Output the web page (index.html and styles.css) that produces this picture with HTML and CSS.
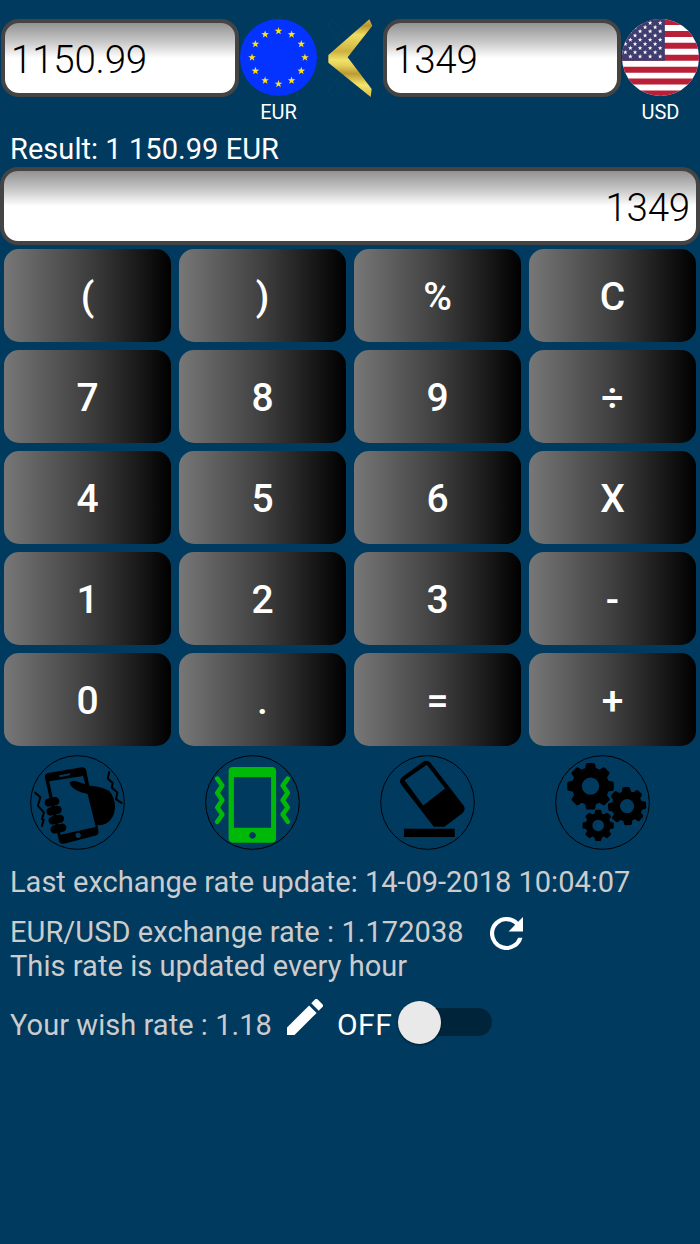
FILE: index.html
```html
<!DOCTYPE html>
<html lang="en">
<head>
    <meta charset="UTF-8">
    <meta name="viewport" content="width=device-width, initial-scale=1.0">
    <title>Currency calculator</title>
    <link rel="stylesheet" href="styles.css">
</head>
<body>
    <div class="converter">
        <input class="field" type="text" value="1150.99">
        <div class="currency">
            <svg class="flag" viewBox="-115 -115 230 230">
                <defs>
                    <path id="star" d="M0-12L2.8-3.9L11.4-3.7L4.6 1.5L7.1 9.7L0 4.8L-7.1 9.7L-4.6 1.5L-11.4-3.7L-2.8-3.9Z"/>
                </defs>
                <circle r="115" fill="#0433ff"/>
                <g fill="#ffe11a">
                    <use href="#star" x="0" y="-79"/>
                    <use href="#star" x="39" y="-69"/>
                    <use href="#star" x="68" y="-40"/>
                    <use href="#star" x="79" y="0"/>
                    <use href="#star" x="68" y="40"/>
                    <use href="#star" x="39" y="69"/>
                    <use href="#star" x="0" y="79"/>
                    <use href="#star" x="-40" y="69"/>
                    <use href="#star" x="-69" y="40"/>
                    <use href="#star" x="-79" y="0"/>
                    <use href="#star" x="-69" y="-40"/>
                    <use href="#star" x="-40" y="-69"/>
                </g>
            </svg>
            <span>EUR</span>
        </div>
        <svg class="arrow" viewBox="0 0 192 234">
            <defs>
                <linearGradient id="gold" gradientUnits="userSpaceOnUse" x1="100" y1="0" x2="92" y2="234">
                    <stop offset="0" stop-color="#d6b446"/>
                    <stop offset="0.08" stop-color="#b8942e"/>
                    <stop offset="0.2" stop-color="#efdd64"/>
                    <stop offset="0.3" stop-color="#e2ca52"/>
                    <stop offset="0.42" stop-color="#cdb040"/>
                    <stop offset="0.53" stop-color="#f0e26a"/>
                    <stop offset="0.6" stop-color="#e4cf58"/>
                    <stop offset="0.7" stop-color="#bd9a33"/>
                    <stop offset="0.84" stop-color="#f3e56a"/>
                    <stop offset="1" stop-color="#d6b846"/>
                </linearGradient>
            </defs>
            <path d="M42 2L160 110L166 125L40 232L31 212L108 116L31 20Z" fill="none" stroke="#0b4262" stroke-width="2"/>
            <path d="M154 1L163 20L89 115L161 210L158 234L31 131V108Z" fill="url(#gold)"/>
        </svg>
        <input class="field" type="text" value="1349">
        <div class="currency">
            <svg class="flag" viewBox="8 13 230 230">
                <defs>
                    <clipPath id="round"><circle cx="123" cy="128" r="115"/></clipPath>
                    <g id="rowA">
                        <use href="#star" transform="translate(122 0) scale(.6)"/>
                        <use href="#star" transform="translate(92 0) scale(.6)"/>
                        <use href="#star" transform="translate(62 0) scale(.6)"/>
                        <use href="#star" transform="translate(33 0) scale(.6)"/>
                    </g>
                    <g id="rowB">
                        <use href="#star" transform="translate(107 0) scale(.6)"/>
                        <use href="#star" transform="translate(77 0) scale(.6)"/>
                        <use href="#star" transform="translate(47 0) scale(.6)"/>
                        <use href="#star" transform="translate(18 0) scale(.6)"/>
                    </g>
                </defs>
                <g clip-path="url(#round)">
                    <path fill="#fff" d="M0 0h250v250H0z"/>
                    <path stroke="#b91f36" stroke-width="17.8" d="M0 22h250M0 57.6h250M0 93.2h250M0 128.8h250M0 164.4h250M0 200h250M0 235.6h250"/>
                    <path fill="#3f3c70" d="M0 0h136v137.7H0z"/>
                    <g fill="#fff">
                        <use href="#rowA" y="25"/>
                        <use href="#rowB" y="37.5"/>
                        <use href="#rowA" y="50"/>
                        <use href="#rowB" y="62.5"/>
                        <use href="#rowA" y="75"/>
                        <use href="#rowB" y="87.5"/>
                        <use href="#rowA" y="100"/>
                        <use href="#rowB" y="112.5"/>
                        <use href="#rowA" y="125"/>
                    </g>
                </g>
            </svg>
            <span>USD</span>
        </div>
    </div>

    <p class="result">Result: 1 150.99 EUR</p>
    <input class="field display" type="text" value="1349">

    <div class="keys">
        <button>(</button>
        <button>)</button>
        <button>%</button>
        <button>C</button>
        <button>7</button>
        <button>8</button>
        <button>9</button>
        <button>÷</button>
        <button>4</button>
        <button>5</button>
        <button>6</button>
        <button>X</button>
        <button>1</button>
        <button>2</button>
        <button>3</button>
        <button>-</button>
        <button>0</button>
        <button>.</button>
        <button>=</button>
        <button>+</button>
    </div>

    <div class="tools">
        <!-- shake to clear -->
        <svg viewBox="30 29 286 286">
            <circle class="ring" cx="173" cy="172" r="141"/>
            <path fill-rule="evenodd" d="M84 83L186 66Q196 65 199 75L236 256Q238 268 228 271L132 296Q120 298 117 287L75 97Q73 86 84 83ZM88 108L122 269L228 246L190 92ZM118 90L151 84L150 90L119 96ZM175 263a8 8 0 1 0 .1 0Z"/>
            <path d="M150 112Q154 104 168 107L208 121Q243 124 268 137Q286 156 286 188Q284 222 258 236Q246 242 232 240L209 147Q180 142 165 132Q149 122 150 112Z"/>
            <path class="finger" d="M86 172L106 168M92 199L113 194M98 226L120 221M104 253L127 248"/>
            <path class="shake" d="M44 141L61 156L54 182L72 202L66 222L71 225L65 245M269 78L264 100L279 113L276 127L293 142L289 162L308 175"/>
        </svg>
        <!-- vibration -->
        <svg viewBox="30 29 286 286">
            <circle class="ring" cx="173" cy="172" r="141"/>
            <g class="green">
                <path fill-rule="evenodd" d="M114 65H232Q244 65 244 77V280Q244 293 232 293H114Q101 293 101 280V77Q101 65 114 65ZM117 96V248H229V96ZM173 261a10 10 0 1 0 .1 0Z"/>
                <path class="wave" d="M67 100L82 121L67 143L82 165L67 187L82 208L67 230M279 100L264 121L279 143L264 165L279 187L264 208L279 230"/>
            </g>
        </svg>
        <!-- eraser -->
        <svg viewBox="30 29 286 286">
            <circle class="ring" cx="173" cy="172" r="141"/>
            <path fill-rule="evenodd" d="M97 95L158 51Q172 41 183 54L281 180Q290 193 278 204L224 245H192L93 117Q86 104 97 95ZM104 105L160 181L226 130L171 58Z"/>
            <path d="M102 251H255V276H102Z"/>
        </svg>
        <!-- settings -->
        <svg viewBox="30 29 286 286">
            <defs>
                <g id="gear">
                    <circle r="41" fill="none" stroke="#000" stroke-width="30"/>
                    <path id="teeth" d="M-17-50L-14-66Q-13-70-9-70H9Q13-70 14-66L17-50ZM-17 50L-14 66Q-13 70-9 70H9Q13 70 14 66L17 50ZM-50-17L-66-14Q-70-13-70-9V9Q-70 13-66 14L-50 17ZM50-17L66-14Q70-13 70-9V9Q70 13 66 14L50 17Z"/>
                    <use href="#teeth" transform="rotate(45)"/>
                </g>
            </defs>
            <circle class="ring" cx="173" cy="172" r="141"/>
            <use href="#gear" transform="translate(137 123)"/>
            <use href="#gear" transform="translate(247 183) rotate(-3) scale(.82)"/>
            <use href="#gear" transform="translate(160 241) scale(.67)"/>
        </svg>
    </div>

    <div class="info">
        <p>Last exchange rate update: 14-09-2018 10:04:07</p>
        <div class="rate">
            <p>EUR/USD exchange rate : 1.172038<br>This rate is updated every hour</p>
            <svg class="refresh" viewBox="4 4 16 16">
                <path d="M17.65 6.35A7.96 7.96 0 0 0 12 4a8 8 0 1 0 7.73 10h-2.08A6 6 0 1 1 12 6c1.66 0 3.14.69 4.22 1.78L13 11h7V4z"/>
            </svg>
        </div>
        <div class="wish">
            <p>Your wish rate : 1.18</p>
            <svg class="pencil" viewBox="3 3 18 18">
                <path d="M3 17.25V21h3.75L17.81 9.94l-3.75-3.75zM20.71 7.04a1 1 0 0 0 0-1.41l-2.34-2.34a1 1 0 0 0-1.41 0l-1.83 1.83 3.75 3.75z"/>
            </svg>
            <span class="off">OFF</span>
            <div class="switch"><div class="knob"></div></div>
        </div>
    </div>
</body>
</html>
```

FILE: styles.css
```css
body {
    box-sizing: border-box;
    min-height: 100vh;
    margin: 0;
    padding-top: 19px;
    font-family: Roboto, sans-serif;
    font-size: 29px;
    line-height: 34px;
    background-color: #003a5f;
    color: white;
}
p {
    margin: 0;
}
svg {
    display: block;
    flex-shrink: 0;
}
.converter {
    display: flex;
    align-items: flex-start;
    height: 113px;
}
.field {
    box-sizing: border-box;
    width: 238px;
    height: 78px;
    margin-left: 1px;
    padding: 2px 5px 0 6px;
    border: 4px solid #444;
    border-radius: 18px;
    background: linear-gradient(#929292, #c8c8c8 27%, white 50%);
    font-family: Roboto, sans-serif;
    font-size: 38.5px;
    font-weight: 300;
    letter-spacing: -0.2px;
    color: black;
    outline: none;
}
.currency {
    width: 78px;
    text-align: center;
    font-size: 20px;
    line-height: 28px;
}
.currency span {
    padding-left: 1px;
}
.flag {
    width: 77px;
    height: 77px;
    margin: 0 auto 2px;
}
.arrow {
    width: 64px;
    height: 78px;
    margin: 0 0 0 1px;
}
.result {
    height: 35px;
    padding-left: 10px;
    letter-spacing: 0.05px;
}
.display {
    display: block;
    width: 700px;
    margin-left: 0;
    padding-right: 6px;
    text-align: right;
}
.keys {
    display: grid;
    grid-template-columns: repeat(4, 167px);
    grid-auto-rows: 93px;
    gap: 8px;
    padding: 4px 4px 9px;
}
button {
    padding: 3px 0 0;
    border: none;
    border-radius: 15px;
    background: linear-gradient(to right, #777, #3f3f3f 50%, black);
    font-family: Roboto, sans-serif;
    font-size: 39px;
    font-weight: 500;
    color: white;
    cursor: pointer;
}
.tools {
    display: grid;
    grid-template-columns: repeat(4, 175px);
    height: 110px;
}
.tools svg {
    width: 95px;
    height: 95px;
    margin-left: 30px;
}
.ring {
    fill: none;
    stroke: black;
    stroke-width: 3;
}
.finger {
    fill: none;
    stroke: black;
    stroke-width: 25;
    stroke-linecap: round;
}
.shake {
    fill: none;
    stroke: black;
    stroke-width: 6;
}
.green {
    fill: #00b807;
}
.wave {
    fill: none;
    stroke: #00b807;
    stroke-width: 14;
    stroke-linecap: round;
    stroke-linejoin: round;
}
.info {
    padding-left: 10px;
    color: #ccc;
}
.rate {
    display: flex;
    margin: 16px 0 25px;
    letter-spacing: 0.06px;
}
.refresh {
    width: 33px;
    height: 33px;
    margin: 2px 0 0 26px;
    fill: white;
}
.wish {
    display: flex;
    letter-spacing: 0.05px;
}
.pencil {
    width: 36px;
    height: 36px;
    margin: -9px 0 0 15px;
    fill: white;
}
.off {
    margin-left: 14px;
    font-size: 30px;
    line-height: 33px;
    letter-spacing: 0.5px;
    color: white;
}
.switch {
    width: 92px;
    height: 28px;
    margin: 0 0 0 8px;
    border-radius: 14px;
    background: #00253b;
}
.knob {
    position: relative;
    top: -7px;
    left: -2px;
    width: 43px;
    height: 43px;
    border-radius: 50%;
    background: #e9e9e9;
    box-shadow: 0 1px 2px rgba(0, 0, 0, 0.6);
}
```
